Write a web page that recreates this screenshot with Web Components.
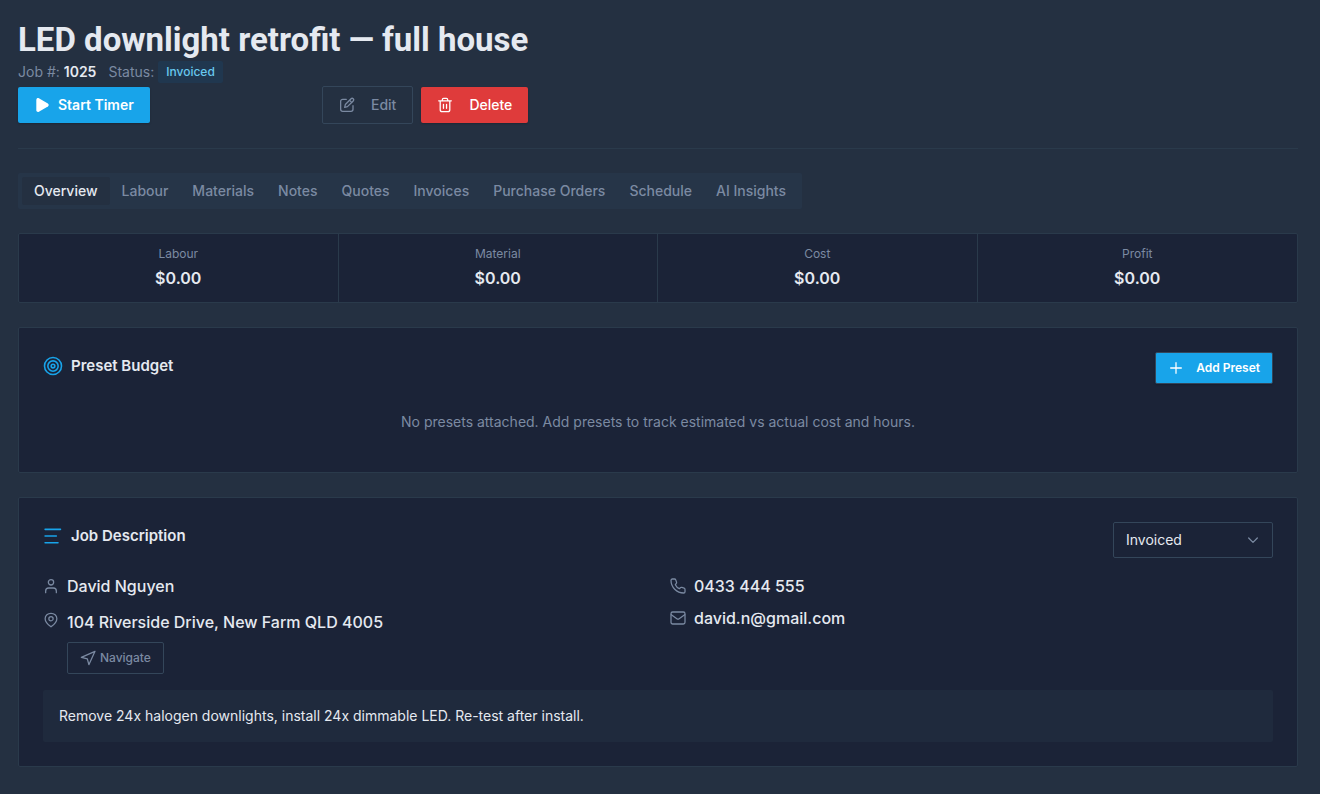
<!DOCTYPE html>
<html lang="en">
<head>
<meta charset="utf-8">
<meta name="viewport" content="width=device-width, initial-scale=1">
<title>LED downlight retrofit — full house</title>
<style>
  :root {
    --bg: #243041;
    --card: #1b2337;
    --line: #2a3a4b;
    --control-line: #34465a;
    --text: #e5e9f0;
    --muted: #7b8aa2;
    --primary: #18a4ea;
    --danger: #df3b3b;
  }
  body {
    margin: 0;
    background: var(--bg);
    color: var(--text);
    font-family: Inter, "Liberation Sans", sans-serif;
    font-size: 14px;
    line-height: 20px;
  }
</style>
</head>
<body>
<job-page>
  <job-header slot="header" name="LED downlight retrofit — full house" number="1025" status="Invoiced"></job-header>
  <job-tabs items="Overview,Labour,Materials,Notes,Quotes,Invoices,Purchase Orders,Schedule,AI Insights"></job-tabs>
  <job-stats>
    <job-stat label="Labour">$0.00</job-stat>
    <job-stat label="Material">$0.00</job-stat>
    <job-stat label="Cost">$0.00</job-stat>
    <job-stat label="Profit">$0.00</job-stat>
  </job-stats>
  <job-card icon="target" heading="Preset Budget">
    <job-button slot="action" kind="primary" size="small" icon="plus">Add Preset</job-button>
    <empty-note>No presets attached. Add presets to track estimated vs actual cost and hours.</empty-note>
  </job-card>
  <job-card icon="lines" heading="Job Description">
    <status-select slot="action"></status-select>
    <job-contact></job-contact>
    <job-note>Remove 24x halogen downlights, install 24x dimmable LED. Re-test after install.</job-note>
  </job-card>
</job-page>

<script>
const ICONS = {
  play: '<path d="M3.500 4.200v15.600c0 2 2.100 3.100 3.800 2.200l13.500-7.800c1.700-1 1.700-3.400 0-4.400L7.300 2C5.600 1.100 3.500 2.200 3.500 4.200z" fill="currentColor" stroke="none"/>',
  edit: '<path d="M11 3.500H5.500a3 3 0 0 0-3 3v12a3 3 0 0 0 3 3H18a3 3 0 0 0 3-3V13"/><path d="M8.500 15.500l1-4.200 8.600-8.600a2.200 2.200 0 0 1 3.200 3.200l-8.600 8.600z"/><path d="M16 5l3 3"/>',
  trash: '<path d="M2.500 5.800h19M8 5.500V4a2 2 0 0 1 2-2h4a2 2 0 0 1 2 2v1.500M4.800 6v13a3 3 0 0 0 3 3h8.400a3 3 0 0 0 3-3V6M9.700 11v6M14.300 11v6"/>',
  plus: '<path d="M12 4v16M4 12h16"/>',
  target: '<circle cx="12" cy="12" r="10.200"/><circle cx="12" cy="12" r="6.200"/><circle cx="12" cy="12" r="2.200"/>',
  lines: '<path d="M2.500 4H21M2.500 12H16M2.500 20H18"/>',
  user: '<circle cx="12" cy="6.500" r="4"/><path d="M4 22v-2.500a4.500 4.500 0 0 1 4.500-4.500h7a4.500 4.500 0 0 1 4.500 4.500V22"/>',
  pin: '<path d="M12 22.200C8.500 19.500 3.200 15.700 3.200 10 3.200 5.300 7.200 2 12 2s8.800 3.300 8.800 8c0 5.700-5.300 9.500-8.800 12.200z"/><circle cx="12" cy="10" r="3.200"/>',
  phone: '<path d="M3.500 1.500h3.200c.9 0 1.600.5 1.900 1.300l1.200 3.400c.2.600.1 1.300-.3 1.800L8 10c1.300 2.700 3.400 4.800 6 6l2-1.600c.5-.4 1.200-.5 1.800-.3l3.400 1.200c.8.300 1.300 1 1.300 1.900v3.300c0 1.100-.9 2-2 2C10 22.500 1.500 14 1.500 3.500c0-1.100.9-2 2-2z"/>',
  mail: '<rect x="1.500" y="3" width="21" height="18" rx="2.500"/><path d="M2 7l8.300 6c1 .7 2.400.7 3.400 0L22 7"/>',
  navigate: '<path d="M22.500 2L2 11l9 2.300L13.300 22z"/>',
  chevron: '<path d="M5.500 9l6.500 6.500L18.500 9"/>'
};

class JobIcon extends HTMLElement {
  connectedCallback() {
    this.attachShadow({ mode: 'open' }).innerHTML = `
      <style>
        :host { display: inline-flex; flex: none; width: 16px; height: 16px; }
        svg { width: 100%; height: 100%; fill: none; stroke: currentColor; stroke-width: 1.9; stroke-linecap: round; stroke-linejoin: round; }
      </style>
      <svg viewBox="0 0 24 24" aria-hidden="true">${ICONS[this.getAttribute('name')]}</svg>
    `;
  }
}

class JobButton extends HTMLElement {
  connectedCallback() {
    this.attachShadow({ mode: 'open' }).innerHTML = `
      <style>
        :host { display: inline-flex; --gap: 16px; }
        button {
          display: flex; align-items: center; gap: var(--gap);
          height: 36px; padding: 0 16px; border: 0; border-radius: 2px;
          font: 500 14px/20px Inter, "Liberation Sans", sans-serif;
          background: none; color: #fff; cursor: pointer;
          box-shadow: 0 1px 2px rgba(0, 0, 0, 0.2);
        }
        :host([kind="primary"]) button { background: var(--primary); font-weight: 600; }
        :host([kind="danger"]) button { background: var(--danger); }
        :host([kind="outline"]) button { height: 38px; border: 1px solid var(--control-line); color: var(--muted); box-shadow: none; }
        :host([tight]) { --gap: 8px; }
        :host([size="small"]) { --gap: 12px; }
        :host([size="small"]) button { height: 32px; padding: 0 12px; border: 1px solid var(--control-line); font-size: 12px; line-height: 16px; }
        :host([size="small"][tight]) { --gap: 4px; }
      </style>
      <button type="button"><job-icon name="${this.getAttribute('icon')}"></job-icon><slot></slot></button>
    `;
  }
}

class JobHeader extends HTMLElement {
  connectedCallback() {
    this.attachShadow({ mode: 'open' }).innerHTML = `
      <style>
        :host { display: block; padding-bottom: 24px; border-bottom: 1px solid var(--line); }
        .inner { display: inline-flex; flex-direction: column; vertical-align: top; }
        h1 { margin: 0; font: 700 33px/40px Roboto, Inter, sans-serif; }
        .meta { display: flex; align-items: center; gap: 12px; height: 24px; color: var(--muted); }
        strong { font-weight: 600; color: var(--text); }
        .status { display: flex; align-items: center; gap: 4px; }
        .badge { padding: 3px 8px; border-radius: 2px; background: #20374f; color: #68c8ee; font-size: 12px; line-height: 16px; font-weight: 500; }
        .actions { display: flex; align-items: center; gap: 8px; margin-top: 2px; }
        .space { flex: 1; }
      </style>
      <div class="inner">
        <h1>${this.getAttribute('name')}</h1>
        <div class="meta">
          <span>Job #: <strong>${this.getAttribute('number')}</strong></span>
          <span class="status">Status: <span class="badge">${this.getAttribute('status')}</span></span>
        </div>
        <div class="actions">
          <job-button kind="primary" icon="play" tight>Start Timer</job-button>
          <span class="space"></span>
          <job-button kind="outline" icon="edit">Edit</job-button>
          <job-button kind="danger" icon="trash">Delete</job-button>
        </div>
      </div>
    `;
  }
}

class JobTabs extends HTMLElement {
  connectedCallback() {
    this.attachShadow({ mode: 'open' }).innerHTML = `
      <style>
        :host { display: block; }
        div { display: inline-flex; vertical-align: top; padding: 4px; border-radius: 2px; background: #263548; }
        button {
          padding: 4px 12px; border: 0; border-radius: 2px; background: none; color: var(--muted);
          font: 500 14px/20px Inter, "Liberation Sans", sans-serif; cursor: pointer;
        }
        button[aria-selected="true"] { background: var(--bg); color: var(--text); }
      </style>
      <div role="tablist"></div>
    `;
    const list = this.shadowRoot.querySelector('div');
    this.getAttribute('items').split(',').forEach((item, i) => {
      const tab = document.createElement('button');
      tab.type = 'button';
      tab.setAttribute('role', 'tab');
      tab.setAttribute('aria-selected', i === 0);
      tab.textContent = item;
      tab.onclick = () => {
        list.querySelectorAll('button').forEach(el => el.setAttribute('aria-selected', el === tab));
      };
      list.append(tab);
    });
  }
}

class JobStats extends HTMLElement {
  connectedCallback() {
    this.attachShadow({ mode: 'open' }).innerHTML = `
      <style>
        :host { display: grid; grid-template-columns: repeat(4, 1fr); border: 1px solid var(--line); border-radius: 2px; background: var(--card); }
        ::slotted(:not(:last-child)) { border-right: 1px solid var(--line); }
      </style>
      <slot></slot>
    `;
  }
}

class JobStat extends HTMLElement {
  connectedCallback() {
    this.attachShadow({ mode: 'open' }).innerHTML = `
      <style>
        :host { display: flex; flex-direction: column; align-items: center; gap: 4px; padding: 12px; }
        .label { color: var(--muted); font-size: 12px; line-height: 16px; }
        .value { font-size: 16px; line-height: 24px; font-weight: 600; }
      </style>
      <span class="label">${this.getAttribute('label')}</span>
      <span class="value"><slot></slot></span>
    `;
  }
}

class JobCard extends HTMLElement {
  connectedCallback() {
    this.attachShadow({ mode: 'open' }).innerHTML = `
      <style>
        :host { display: block; padding: 24px; border: 1px solid var(--line); border-radius: 2px; background: var(--card); }
        header { display: flex; align-items: flex-start; justify-content: space-between; }
        h2 { display: flex; align-items: center; gap: 8px; margin: 0; font-size: 15px; line-height: 28px; font-weight: 600; }
        job-icon { width: 20px; height: 20px; color: var(--primary); }
      </style>
      <header>
        <h2><job-icon name="${this.getAttribute('icon')}"></job-icon>${this.getAttribute('heading')}</h2>
        <slot name="action"></slot>
      </header>
      <slot></slot>
    `;
  }
}

class EmptyNote extends HTMLElement {
  connectedCallback() {
    this.attachShadow({ mode: 'open' }).innerHTML = `
      <style>
        :host { display: block; margin-top: 12px; padding: 16px 0; text-align: center; color: var(--muted); }
      </style>
      <slot></slot>
    `;
  }
}

class StatusSelect extends HTMLElement {
  connectedCallback() {
    this.attachShadow({ mode: 'open' }).innerHTML = `
      <style>
        :host { display: grid; align-items: center; width: 160px; }
        select, job-icon { grid-area: 1 / 1; }
        select {
          appearance: none; width: 100%; height: 36px; padding: 0 12px;
          border: 1px solid var(--control-line); border-radius: 2px; background: var(--card); color: var(--text);
          font: 400 14px/20px Inter, "Liberation Sans", sans-serif;
        }
        job-icon { justify-self: end; margin-right: 12px; color: var(--muted); pointer-events: none; }
      </style>
      <select aria-label="Status">
        <option>Invoiced</option>
      </select>
      <job-icon name="chevron"></job-icon>
    `;
  }
}

class JobContact extends HTMLElement {
  connectedCallback() {
    this.attachShadow({ mode: 'open' }).innerHTML = `
      <style>
        :host { display: grid; grid-template-columns: 1fr 1fr; gap: 24px; margin-top: 16px; font-size: 16px; line-height: 24px; font-weight: 500; }
        .col { display: flex; flex-direction: column; gap: 8px; }
        .col.client { gap: 12px; }
        .row { display: flex; align-items: center; gap: 8px; }
        .row.top { align-items: flex-start; }
        .row.top > job-icon { margin-top: 2px; }
        .place { display: flex; flex-direction: column; align-items: flex-start; gap: 8px; }
        .row > job-icon { color: var(--muted); }
        a { color: inherit; text-decoration: none; }
      </style>
      <div class="col client">
        <div class="row"><job-icon name="user"></job-icon><span>David Nguyen</span></div>
        <div class="row top">
          <job-icon name="pin"></job-icon>
          <div class="place">
            <span>104 Riverside Drive, New Farm QLD 4005</span>
            <job-button kind="outline" size="small" icon="navigate" tight>Navigate</job-button>
          </div>
        </div>
      </div>
      <div class="col">
        <div class="row"><job-icon name="phone"></job-icon><a href="tel:0433444555">0433 444 555</a></div>
        <div class="row"><job-icon name="mail"></job-icon><a href="mailto:david.n@gmail.com">david.n@gmail.com</a></div>
      </div>
    `;
  }
}

class JobNote extends HTMLElement {
  connectedCallback() {
    this.attachShadow({ mode: 'open' }).innerHTML = `
      <style>
        :host { display: block; margin-top: 16px; padding: 16px; border-radius: 2px; background: #1f2a3d; }
      </style>
      <slot></slot>
    `;
  }
}

class JobPage extends HTMLElement {
  connectedCallback() {
    this.attachShadow({ mode: 'open' }).innerHTML = `
      <style>
        :host { display: block; }
        main { display: flex; flex-direction: column; gap: 24px; padding: 20px 22px 24px 18px; }
      </style>
      <main>
        <slot name="header"></slot>
        <slot></slot>
      </main>
    `;
  }
}

customElements.define('job-icon', JobIcon);
customElements.define('job-button', JobButton);
customElements.define('job-header', JobHeader);
customElements.define('job-tabs', JobTabs);
customElements.define('job-stats', JobStats);
customElements.define('job-stat', JobStat);
customElements.define('job-card', JobCard);
customElements.define('empty-note', EmptyNote);
customElements.define('status-select', StatusSelect);
customElements.define('job-contact', JobContact);
customElements.define('job-note', JobNote);
customElements.define('job-page', JobPage);
</script>
</body>
</html>
